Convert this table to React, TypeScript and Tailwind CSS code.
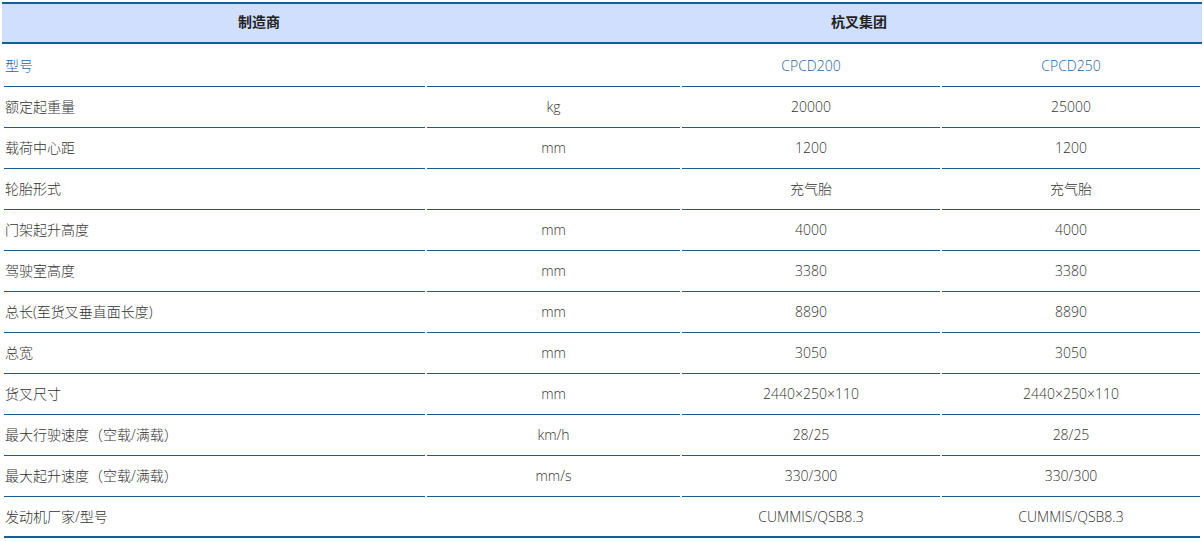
import React from "react";

const rows: [string, string, string, string][] = [
  ["额定起重量", "kg", "20000", "25000"],
  ["载荷中心距", "mm", "1200", "1200"],
  ["轮胎形式", "", "充气胎", "充气胎"],
  ["门架起升高度", "mm", "4000", "4000"],
  ["驾驶室高度", "mm", "3380", "3380"],
  ["总长(至货叉垂直面长度)", "mm", "8890", "8890"],
  ["总宽", "mm", "3050", "3050"],
  ["货叉尺寸", "mm", "2440×250×110", "2440×250×110"],
  ["最大行驶速度（空载/满载）", "km/h", "28/25", "28/25"],
  ["最大起升速度（空载/满载）", "mm/s", "330/300", "330/300"],
  ["发动机厂家/型号", "", "CUMMIS/QSB8.3", "CUMMIS/QSB8.3"],
];

const font = {
  fontFamily: '"Open Sans", "Noto Sans CJK SC", sans-serif',
};

function Row({
  cells,
  last,
  blue,
}: {
  cells: [string, string, string, string];
  last?: boolean;
  blue?: boolean;
}) {
  const cellBase = last
    ? "h-[39px] flex items-center"
    : "h-[41px] flex items-center pb-[1px] border-b border-[#135e96]";
  const color = blue ? "text-[#1d65a4]" : "text-[#333333]";
  return (
    <div className="grid grid-cols-[421px_253px_258px_258px] gap-x-[2px]">
      <div className={`${cellBase} ${color} pl-[1px]`}>{cells[0]}</div>
      <div className={`${cellBase} ${color} justify-center`}>{cells[1]}</div>
      <div className={`${cellBase} ${color} justify-center`}>{cells[2]}</div>
      <div className={`${cellBase} ${color} justify-center`}>{cells[3]}</div>
    </div>
  );
}

export default function App() {
  return (
    <div className="w-[1204px] h-[541px] bg-white pt-[2px] text-[14px] font-light" style={font}>
      <div className="ml-[2px] w-[1200px] border-t-2 border-b-2 border-[#135e96] bg-[#d0dffe] h-[42px] pb-[3px] grid grid-cols-[514px_686px] items-center font-bold text-[#222222]">
        <div className="text-center">制造商</div>
        <div className="text-center">杭叉集团</div>
      </div>
      <div className="ml-[4px] w-[1196px] pt-[2px] border-b-2 border-[#135e96]">
        <Row cells={["型号", "", "CPCD200", "CPCD250"]} blue />
        {rows.map((r, i) => (
          <Row key={i} cells={r} last={i === rows.length - 1} />
        ))}
      </div>
    </div>
  );
}
